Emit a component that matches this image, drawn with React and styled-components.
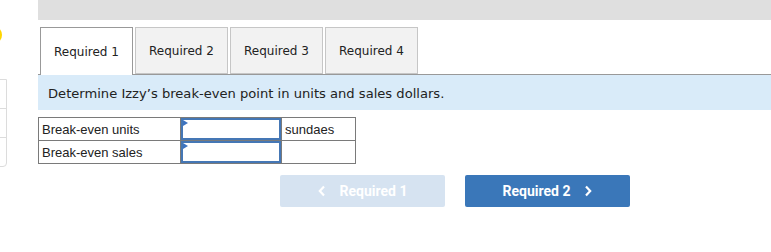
import React from "react";
import styled, { createGlobalStyle } from "styled-components";

const Global = createGlobalStyle`
  html, body { margin: 0; padding: 0; background: #fff; }
  body { font-family: "DejaVu Sans", Verdana, sans-serif; }
`;

const Page = styled.div`
  display: flex;
  width: 771px;
  height: 252px;
  overflow: hidden;
`;

const LeftRail = styled.div`
  width: 38px;
  flex: none;
  overflow: hidden;
  display: flex;
  flex-direction: column;
`;

const Dot = styled.div`
  width: 18px;
  height: 18px;
  border-radius: 50%;
  background: #ffd600;
  margin: 26px 0 0 -16px;
`;

const SideBox = styled.div`
  margin: 35px 0 0 -10px;
  width: 15px;
  border: 1px solid #dcdcdc;
  border-radius: 0 0 4px 0;
  display: flex;
  flex-direction: column;
`;

const SideCell = styled.div`
  height: 28px;
  & + & { border-top: 1px solid #dcdcdc; }
`;

const Main = styled.div`
  flex: 1;
  display: flex;
  flex-direction: column;
  align-items: stretch;
`;

const TopBar = styled.div`
  height: 20px;
  background: #dfdfdf;
`;

const Tabs = styled.div`
  display: flex;
  gap: 2px;
  margin-top: 7px;
  padding-left: 2px;
  border-bottom: 1px solid #999;
  height: 47px;
`;

const Tab = styled.div`
  width: 93px;
  box-sizing: border-box;
  border: 1px solid ${p => (p.$active ? "#999" : "#c6c6c6")};
  border-bottom: ${p => (p.$active ? "none" : "1px solid #c6c6c6")};
  background: ${p => (p.$active ? "#fff" : "#f2f2f2")};
  display: flex;
  align-items: center;
  justify-content: center;
  font-size: 12px;
  color: #222;
  position: relative;
  z-index: 1;
  padding-top: 1px;
  margin-bottom: ${p => (p.$active ? "-1px" : "0")};
  height: ${p => (p.$active ? "48px" : "47px")};
`;

const Instruction = styled.div`
  background: #d9ebf9;
  height: 35px;
  display: flex;
  align-items: center;
  padding: 1px 0 0 10px;
  box-sizing: border-box;
  font-size: 13.1px;
  color: #222;
`;

const Table = styled.table`
  align-self: flex-start;
  margin-top: 7px;
  border-collapse: collapse;
  table-layout: fixed;
  width: 316px;
  font-family: "Liberation Sans", Arial, sans-serif;
  font-size: 13px;
  color: #222;
`;

const Cell = styled.td`
  border: 1px solid #7a7a7a;
  height: 22px;
  padding: 0 0 0 3px;
  width: ${p => p.$w}px;
  box-sizing: border-box;
`;

const InputCell = styled.td`
  border: 1px solid #7a7a7a;
  padding: 0;
  width: 100px;
  height: 22px;
`;

const Input = styled.div`
  position: relative;
  height: 22px;
  box-sizing: border-box;
  border: 2px solid #4577b5;
  background: #fff;
  &::before {
    content: "";
    position: absolute;
    left: 0;
    top: 0;
    border-left: 5px solid #3d73c0;
    border-top: 3px solid transparent;
    border-bottom: 3px solid transparent;
  }
`;

const Nav = styled.div`
  display: flex;
  gap: 20px;
  margin: 11px 0 0 242px;
`;

const NavButton = styled.button`
  width: 165px;
  height: 32px;
  border: none;
  border-radius: 2px;
  background: ${p => (p.$disabled ? "#d6e3f1" : "#3a77b9")};
  color: #fff;
  font-family: Roboto, "Liberation Sans", sans-serif;
  font-weight: 700;
  font-size: 14px;
  display: flex;
  align-items: center;
  justify-content: center;
  gap: 14px;
  padding: 0;
`;

const Chevron = ({ dir }) => (
  <svg width="8" height="12" viewBox="0 0 8 12">
    <path
      d={dir === "left" ? "M6 1.5 L1.8 6 L6 10.5" : "M2 1.5 L6.2 6 L2 10.5"}
      fill="none"
      stroke="#fff"
      strokeWidth="2.2"
    />
  </svg>
);

export default function App() {
  return (
    <>
      <Global />
      <Page>
        <LeftRail>
          <Dot />
          <SideBox>
            <SideCell />
            <SideCell />
            <SideCell />
          </SideBox>
        </LeftRail>
        <Main>
          <TopBar />
          <Tabs>
            <Tab $active>Required 1</Tab>
            <Tab>Required 2</Tab>
            <Tab>Required 3</Tab>
            <Tab>Required 4</Tab>
          </Tabs>
          <Instruction>Determine Izzy’s break-even point in units and sales dollars.</Instruction>
          <Table>
            <tbody>
              <tr>
                <Cell $w={142}>Break-even units</Cell>
                <InputCell><Input /></InputCell>
                <Cell $w={74}>sundaes</Cell>
              </tr>
              <tr>
                <Cell $w={142}>Break-even sales</Cell>
                <InputCell><Input /></InputCell>
                <Cell $w={74}></Cell>
              </tr>
            </tbody>
          </Table>
          <Nav>
            <NavButton $disabled>
              <Chevron dir="left" />
              Required 1
            </NavButton>
            <NavButton>
              Required 2
              <Chevron dir="right" />
            </NavButton>
          </Nav>
        </Main>
      </Page>
    </>
  );
}
